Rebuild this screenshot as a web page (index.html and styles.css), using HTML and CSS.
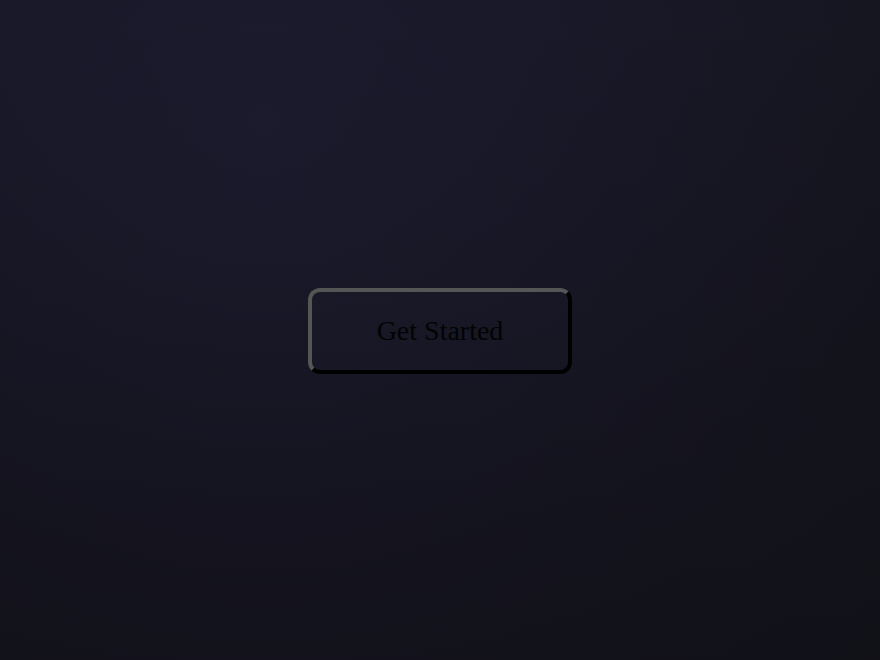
FILE: index.html
```html
<!DOCTYPE html>
<html lang="en">
<head>
<meta charset="utf-8">
<title>Get Started</title>
<link rel="stylesheet" href="styles.css">
</head>
<body>
<main class="stage">
  <button class="cta" type="button">Get Started</button>
</main>
</body>
</html>
```

FILE: styles.css
```css
html, body {
  margin: 0;
  padding: 0;
  height: 100%;
}
body {
  background:
    linear-gradient(180deg, rgba(10, 10, 14, 0) 0%, rgba(10, 10, 14, 0.35) 100%),
    radial-gradient(circle at 30% 20%, #1d1c2f 0%, #191828 40%, #14141c 100%);
  font-family: "Liberation Serif", "Times New Roman", serif;
}
.stage {
  box-sizing: border-box;
  min-height: 100vh;
  padding-top: 2px;
  display: flex;
  align-items: center;
  justify-content: center;
}
.cta {
  box-sizing: border-box;
  width: 264px;
  height: 86px;
  padding: 0;
  border: 4px solid;
  border-color: #555555 #000000 #000000 #555555;
  border-radius: 12px;
  background: rgba(255, 255, 255, 0.006);
  color: #030303;
  font-family: "Liberation Serif", "Times New Roman", serif;
  font-size: 28px;
  line-height: 32px;
  cursor: pointer;
}
```
